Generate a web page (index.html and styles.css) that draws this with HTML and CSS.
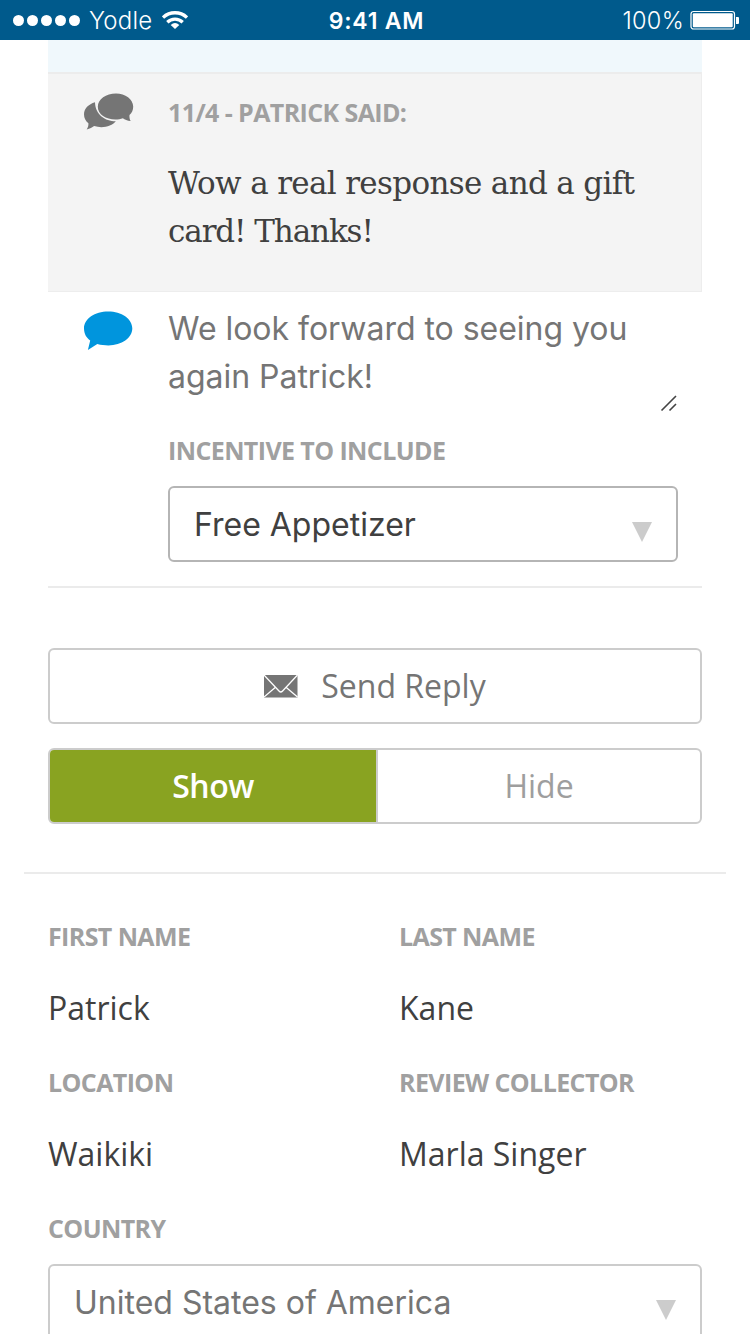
FILE: index.html
```html
<!DOCTYPE html>
<html lang="en">
<head>
<meta charset="utf-8">
<title>Review reply</title>
<link rel="stylesheet" href="styles.css">
</head>
<body>
<header class="status">
  <div class="status-left">
    <svg width="68" height="12" viewBox="0 0 68 12" fill="#fff"><circle cx="5.5" cy="6.500" r="5.5"/><circle cx="19.5" cy="6.500" r="5.5"/><circle cx="33.5" cy="6.500" r="5.5"/><circle cx="47.5" cy="6.500" r="5.5"/><circle cx="61.5" cy="6.500" r="5.5"/></svg>
    <span class="carrier">Yodle</span>
    <svg class="wifi" width="26" height="18" viewBox="0 0 26 18" fill="none" stroke="#fff" stroke-width="3.300"><path d="M1 6.500A17.500 17.500 0 0 1 25 6.500"/><path d="M5.300 11.200A11.200 11.200 0 0 1 20.700 11.200"/><path d="M13 18L8.700 13.900Q13 10.200 17.300 13.900Z" fill="#fff" stroke="none"/></svg>
  </div>
  <span class="clock">9:41 AM</span>
  <div class="status-right">
    <span class="percent">100%</span>
    <svg width="50" height="20" viewBox="0 0 50 20"><rect x="1" y="1.500" width="43.500" height="17.500" rx="2.500" fill="none" stroke="#fff" stroke-width="1.200"/><rect x="2.800" y="3.300" width="39.900" height="13.900" rx="1" fill="#fff"/><path d="M46 7h2q1 0 1 1v5q0 1-1 1h-2z" fill="#fff"/></svg>
  </div>
</header>
<main>
  <section class="thread">
    <div class="previous"></div>
    <article class="comment">
      <svg class="icon" width="50" height="37" viewBox="0 0 50 37" fill="#757575"><path d="M11 9.300C4.500 11.200 0 15.700 0 21.200C0 25 1.600 28 4.400 30.300C4.600 32.700 3.900 34.800 2.700 36.500C5.900 35.700 8.200 34.500 10.100 33.100C18.500 35.600 27.900 33.500 31.800 28.300C21.500 28.400 11.300 22 11 9.300Z"/><path d="M32 .5C22 .5 13.800 6 13.800 13.700C13.800 21.300 21.900 26.500 31.400 26.500C34.200 26.500 36.600 26.100 38.900 25.200C40.700 26.500 43.300 27.700 46.700 28.100C45.600 26.400 45.300 24.200 45.500 22.100C48 19.700 49.200 17 49.200 13.600C49.200 6.200 41.300 .5 32 .5Z"/></svg>
      <div class="comment-body">
        <h2 class="label">11/4 - PATRICK SAID:</h2>
        <p class="quote"><span class="quote-first">Wow a real response and a gift</span><br><span class="quote-last">card! Thanks!</span></p>
      </div>
    </article>
    <div class="reply">
      <svg class="icon" width="50" height="40" viewBox="0 0 50 40" fill="#0095dd"><path d="M24.200 .5C10.800 .5 0 7.900 0 17.300C0 23.100 2.700 27.200 6.200 29.400L3.900 39L13.300 33C17 34 20.700 34.400 24.400 34.400C37.700 34.400 48.300 26.900 48.300 17.300C48.300 7.900 37.500 .5 24.200 .5Z"/></svg>
      <div class="reply-body">
        <div class="draft">We look forward to seeing you<br>again Patrick!
          <svg class="grip" width="18" height="18" viewBox="0 0 18 18" stroke="#444" stroke-width="1.600"><path d="M1.500 15.500L16 1M9.500 15.500L16 9"/></svg>
        </div>
        <h2 class="label incentive">INCENTIVE TO INCLUDE</h2>
        <div class="select"><span>Free Appetizer</span><i class="arrow"></i></div>
      </div>
    </div>
  </section>
  <div class="send"><svg width="34" height="23" viewBox="0 0 34 23"><path d="M0 0h33.500v22.500H0z" fill="#757575"/><path d="M0 0L15 16Q16.800 18 18.600 16L33.500 0M0 22L11.500 12.300M33.500 22L22 12.300" fill="none" stroke="#fff" stroke-width="1.300"/></svg><span>Send Reply</span></div>
  <div class="toggle"><div class="on">Show</div><div class="off">Hide</div></div>
  <section class="details">
    <div class="field"><h2 class="label">FIRST NAME</h2><p>Patrick</p></div>
    <div class="field"><h2 class="label">LAST NAME</h2><p>Kane</p></div>
    <div class="field"><h2 class="label">LOCATION</h2><p>Waikiki</p></div>
    <div class="field"><h2 class="label">REVIEW COLLECTOR</h2><p>Marla Singer</p></div>
    <div class="country"><h2 class="label">COUNTRY</h2><div class="select"><span>United States of America</span><i class="arrow"></i></div></div>
  </section>
</main>
</body>
</html>
```

FILE: styles.css
```css
* { box-sizing: border-box; }
body { margin: 0; height: 1334px; overflow: hidden; background: #fff; color: #404040; font-family: "Open Sans", "Noto Sans", sans-serif; }
h2, p { margin: 0; }
svg { display: block; flex: none; }
.status { height: 40px; background: #005a8c; color: #fff; display: grid; grid-template-columns: 1fr auto 1fr; align-items: center; padding: 0 10px 0 13px; font: 24px/38px Inter, sans-serif; white-space: nowrap; }
.status-left, .status-right { display: flex; align-items: center; }
.status-right { justify-content: flex-end; gap: 6px; }
.carrier { margin-left: 8px; padding-top: 2px; letter-spacing: .2px; font-weight: 300; }
.wifi { margin-left: 10px; }
.clock { font-weight: 600; font-size: 23px; letter-spacing: .8px; padding-top: 2px; }
.percent { font-weight: 300; font-size: 23.500px; letter-spacing: .3px; padding-top: 2px; }
.thread { margin: 0 48px; border-bottom: 2px solid #ebebeb; height: 548px; }
.previous { height: 32px; background: #f0f8fc; }
.comment { height: 220px; border-top: 2px solid #ececec; border-right: 1px solid #ededed; border-bottom: 1px solid #ededed; background: #f4f4f4; display: flex; padding: 19px 0 0 36px; }
.comment-body { margin-left: 34px; padding-top: 3px; }
.label { font-size: 25px; line-height: 32px; padding-bottom: 2px; font-weight: 700; letter-spacing: -.6px; color: #a0a0a0; white-space: nowrap; }
.quote { margin-top: 29px; font: 31px/48px "DejaVu Serif", serif; white-space: nowrap; }
.quote-first { letter-spacing: -.67px; }
.quote-last { letter-spacing: -1.1px; }
.reply { display: flex; padding: 19px 24px 0 36px; }
.reply-body { flex: 1; margin-left: 34px; margin-top: -6px; }
.draft { position: relative; height: 108px; color: #757575; font: 32px/48px Inter, sans-serif; letter-spacing: -.03px; white-space: nowrap; }
.grip { position: absolute; right: 0; bottom: 0; }
.incentive { margin-top: 21px; }
.select { height: 76px; border: 2px solid #b5b5b5; border-radius: 6px; display: flex; justify-content: space-between; align-items: center; padding: 0 24px; font: 32px/70px Inter, sans-serif; white-space: nowrap; }
.select span { padding-top: 2px; }
.reply .select { margin-top: 18px; }
.arrow { border: 10px solid transparent; border-top: 20px solid #ccc; border-bottom: 0; margin-top: 16px; }
.send { margin: 60px 48px 0; height: 76px; border: 2px solid #ccc; border-radius: 6px; display: flex; align-items: center; justify-content: center; gap: 23px; color: #757575; font-size: 32px; line-height: 72px; }
.toggle { margin: 24px 48px 0; height: 76px; border: 2px solid #ccc; border-radius: 6px; overflow: hidden; display: grid; grid-template-columns: 328px 1fr; text-align: center; font-size: 32px; line-height: 72px; }
.on { background: #89a321; color: #fff; border-right: 2px solid #ccc; font-weight: 600; letter-spacing: -.5px; }
.off { color: #9e9e9e; }
.details { margin: 48px 24px 0; border-top: 2px solid #ebebeb; padding: 46px 24px 0; display: grid; grid-template-columns: 351px 1fr; }
.field { height: 146px; white-space: nowrap; }
.field p { font-size: 32px; line-height: 44px; margin-top: 32px; }
.country { grid-column: 1 / 3; }
.country .select { margin-top: 18px; border-color: #ccc; color: #757575; }
```
